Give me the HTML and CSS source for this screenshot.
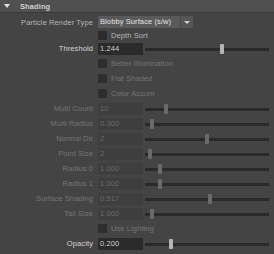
FILE: index.html
```html
<!DOCTYPE html>
<html lang="en">
<head>
<meta charset="UTF-8">
<title>Shading</title>
<link rel="stylesheet" href="styles.css">
</head>
<body>
<div class="panel">
    <div class="frame-head"><span class="tri"></span>Shading</div>
    <div class="rows">
        <div class="row row-menu">
            <span class="lbl">Particle Render Type</span>
            <div class="menu"><span class="menu-text">Blobby Surface (s/w)</span><span class="menu-btn"><span class="arrow"></span></span></div>
        </div>
        <div class="row row-depth">
            <span class="lbl"></span>
            <span class="check"></span><span class="check-text">Depth Sort</span>
        </div>
        <div class="row">
            <span class="lbl bright">Threshold</span>
            <span class="field">1.244</span>
            <div class="slider"><span class="track"></span><span class="handle" style="left: 75px"></span></div>
        </div>
        <div class="row off">
            <span class="lbl"></span>
            <span class="check"></span><span class="check-text">Better Illumination</span>
        </div>
        <div class="row off">
            <span class="lbl"></span>
            <span class="check"></span><span class="check-text">Flat Shaded</span>
        </div>
        <div class="row off">
            <span class="lbl"></span>
            <span class="check"></span><span class="check-text">Color Accum</span>
        </div>
        <div class="row off">
            <span class="lbl">Multi Count</span>
            <span class="field">10</span>
            <div class="slider"><span class="track"></span><span class="handle" style="left: 19px"></span></div>
        </div>
        <div class="row off">
            <span class="lbl">Multi Radius</span>
            <span class="field">0.300</span>
            <div class="slider"><span class="track"></span><span class="handle" style="left: 5px"></span></div>
        </div>
        <div class="row off">
            <span class="lbl">Normal Dir</span>
            <span class="field">2</span>
            <div class="slider"><span class="track"></span><span class="handle" style="left: 60px"></span></div>
        </div>
        <div class="row off">
            <span class="lbl">Point Size</span>
            <span class="field">2</span>
            <div class="slider"><span class="track"></span><span class="handle" style="left: 3px"></span></div>
        </div>
        <div class="row off">
            <span class="lbl">Radius 0</span>
            <span class="field">1.000</span>
            <div class="slider"><span class="track"></span><span class="handle" style="left: 13px"></span></div>
        </div>
        <div class="row off">
            <span class="lbl">Radius 1</span>
            <span class="field">1.000</span>
            <div class="slider"><span class="track"></span><span class="handle" style="left: 13px"></span></div>
        </div>
        <div class="row off">
            <span class="lbl">Surface Shading</span>
            <span class="field">0.517</span>
            <div class="slider"><span class="track"></span><span class="handle" style="left: 63px"></span></div>
        </div>
        <div class="row off">
            <span class="lbl">Tail Size</span>
            <span class="field">1.000</span>
            <div class="slider"><span class="track"></span><span class="handle" style="left: 5px"></span></div>
        </div>
        <div class="row off">
            <span class="lbl"></span>
            <span class="check"></span><span class="check-text">Use Lighting</span>
        </div>
        <div class="row">
            <span class="lbl bright">Opacity</span>
            <span class="field">0.200</span>
            <div class="slider"><span class="track"></span><span class="handle" style="left: 24px"></span></div>
        </div>
    </div>
</div>
</body>
</html>
```
FILE: styles.css
```css
body{
    margin: 0;
    background: #444444;
    font-family: "Liberation Sans", Arial, sans-serif;
    font-size: 7.5px;
    letter-spacing: 0.1px;
}
.panel{
    width: 274px;
    height: 254px;
    background: #444444;
    overflow: hidden;
}
.frame-head{
    height: 12px;
    background: #505050;
    color: #cfcfcf;
    font-weight: bold;
    display: flex;
    align-items: center;
    padding-left: 20px;
    position: relative;
    border-bottom: 1px solid #3a3a3a;
}
.tri{
    position: absolute;
    left: 4px;
    top: 4px;
    width: 0;
    height: 0;
    border-left: 3px solid transparent;
    border-right: 3px solid transparent;
    border-top: 4px solid #e0e0e0;
}
.rows{
    padding-top: 2px;
}
.row{
    height: 15px;
    display: flex;
    align-items: center;
    color: #b4b4b4;
}
.row-menu{
    height: 14px;
}
.row-depth{
    height: 12px;
}
.lbl{
    width: 93px;
    flex: none;
    text-align: right;
    margin-right: 5px;
    white-space: nowrap;
}
.lbl.bright{
    color: #d4d4d4;
}
.menu{
    display: flex;
    height: 12px;
    width: 95px;
}
.menu-text{
    width: 81px;
    background: #5a5a5a;
    color: #e4e4e4;
    padding-left: 2px;
    line-height: 12px;
    white-space: nowrap;
    overflow: hidden;
}
.menu-btn{
    width: 12px;
    background: #555555;
    border-left: 1px solid #4a4a4a;
    display: flex;
    align-items: center;
    justify-content: center;
}
.arrow{
    width: 0;
    height: 0;
    border-left: 3px solid transparent;
    border-right: 3px solid transparent;
    border-top: 3px solid #cfcfcf;
}
.check{
    width: 9px;
    height: 9px;
    background: #2b2b2b;
    flex: none;
}
.check-text{
    margin-left: 4px;
    white-space: nowrap;
}
.field{
    width: 43px;
    height: 12px;
    line-height: 12px;
    padding-left: 2px;
    background: #2b2b2b;
    color: #d0d0d0;
    flex: none;
}
.slider{
    position: relative;
    width: 124px;
    height: 12px;
    margin-left: 2px;
}
.track{
    position: absolute;
    left: 0;
    right: 0;
    top: 5px;
    height: 3px;
    background: #2a2a2a;
}
.handle{
    position: absolute;
    top: 1px;
    width: 4px;
    height: 10px;
    background: #b4b4b4;
    border-radius: 1px;
}
.off{
    color: #757575;
}
.off .check{
    background: #2e2e2e;
}
.off .field{
    background: #3e3e3e;
    color: #6a6a6a;
}
.off .handle{
    background: #6a6a6a;
}
```
